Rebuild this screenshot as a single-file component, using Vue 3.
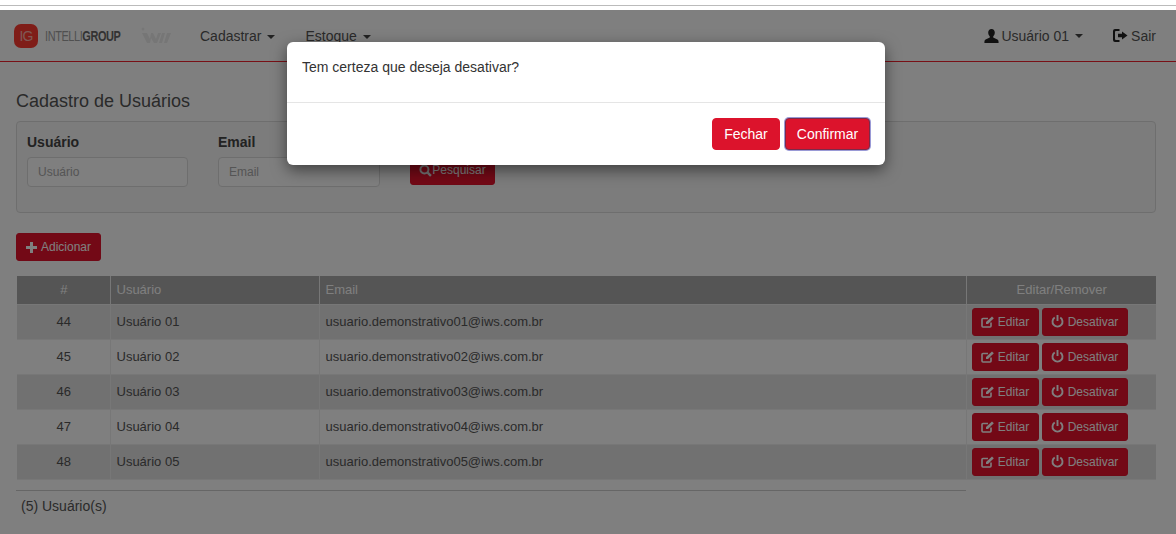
<script setup>
const rows = [
  { id: 44, nome: 'Usuário 01', email: 'usuario.demonstrativo01@iws.com.br' },
  { id: 45, nome: 'Usuário 02', email: 'usuario.demonstrativo02@iws.com.br' },
  { id: 46, nome: 'Usuário 03', email: 'usuario.demonstrativo03@iws.com.br' },
  { id: 47, nome: 'Usuário 04', email: 'usuario.demonstrativo04@iws.com.br' },
  { id: 48, nome: 'Usuário 05', email: 'usuario.demonstrativo05@iws.com.br' },
]
</script>

<template>
  <div class="shot">
    <div class="chrome"></div>
    <div class="page">
      <header class="nav">
        <div class="logo">
          <span class="logo-mark">IG</span>
          <span class="logo-text">INTELLI<b>GROUP</b></span>
          <svg class="iwi" width="32" height="18" viewBox="0 0 32 18">
            <circle cx="3" cy="2" r="1.5" fill="#efefef" />
            <path d="M2 6l5 10h3l1-5 3 5h3l4-10h-3l-2 6-3-6h-2l-1 6-3-6zM22 6l-3 10h3l3-10zM27 6l-3 10h3l4-10z" fill="#ececec" />
          </svg>
        </div>
        <nav class="menu">
          <span class="item">Cadastrar<i class="caret"></i></span>
          <span class="item">Estoque<i class="caret"></i></span>
        </nav>
        <div class="right">
          <span class="user">
            <svg class="ico-user" width="15" height="14" viewBox="0 0 15 14"><path fill="#222" d="M7.5 0C5.4 0 4.2 1.5 4.2 3.6c0 1.5.6 3 1.6 3.9v1L1.6 10.4C.7 10.9.4 11.600.4 14h14.2c0-2.4-.3-3.100-1.200-3.600L9.200 8.500v-1c1-.9 1.600-2.400 1.600-3.900C10.800 1.500 9.600 0 7.500 0z" /></svg>
            Usuário 01<i class="caret"></i>
          </span>
          <span class="sair">
            <svg class="ico-out" width="15" height="13" viewBox="0 0 15 13"><path fill="#222" d="M2 0h4.500v2H3a1 1 0 0 0-1 1v7a1 1 0 0 0 1 1h3.500v2H2a2 2 0 0 1-2-2V2a2 2 0 0 1 2-2z" /><path fill="#222" d="M9 2.500l5.500 4-5.500 4V8.300H5V4.700h4z" /></svg>
            Sair
          </span>
        </div>
      </header>

      <main class="content">
        <h1 class="title">Cadastro de Usuários</h1>
        <section class="filter">
          <div class="field">
            <label>Usuário</label>
            <div class="input">Usuário</div>
          </div>
          <div class="field field-email">
            <label>Email</label>
            <div class="input">Email</div>
          </div>
          <button class="btn btn-search">
            <svg width="13" height="13" viewBox="0 0 12 12"><circle cx="5" cy="5" r="3.700" fill="none" stroke="#e6e6e6" stroke-width="1.800" /><path d="M7.800 7.800L11 11" stroke="#e6e6e6" stroke-width="2.200" /></svg>Pesquisar
          </button>
        </section>

        <button class="btn btn-add">
          <svg width="11" height="11" viewBox="0 0 11 11"><path fill="#fff" d="M4 0h3v4h4v3H7v4H4V7H0V4h4z" /></svg>
          Adicionar
        </button>

        <table class="grid">
          <thead>
            <tr>
              <th class="c-id">#</th>
              <th class="c-nome">Usuário</th>
              <th>Email</th>
              <th class="c-acao">Editar/Remover</th>
            </tr>
          </thead>
          <tbody>
            <tr v-for="r in rows" :key="r.id">
              <td class="c-id">{{ r.id }}</td>
              <td>{{ r.nome }}</td>
              <td>{{ r.email }}</td>
              <td class="acoes">
                <button class="btn btn-row btn-edit">
                  <svg width="13" height="12" viewBox="0 0 13 12"><path fill="none" stroke="#fff" stroke-width="1.600" d="M10 6.500V10a1 1 0 0 1-1 1H2a1 1 0 0 1-1-1V3.500a1 1 0 0 1 1-1h5" /><path fill="#fff" d="M11 .500l1.800 1.800L7 8H5V6z" /></svg>
                  Editar
                </button>
                <button class="btn btn-row btn-off">
                  <svg width="13" height="13" viewBox="0 0 13 13"><path fill="none" stroke="#fff" stroke-width="1.900" d="M3.700 2.500a5 5 0 1 0 5.600 0" /><path stroke="#fff" stroke-width="1.900" d="M6.500 0v6" /></svg>
                  Desativar
                </button>
              </td>
            </tr>
          </tbody>
        </table>
        <div class="count">(5) Usuário(s)</div>
      </main>

      <div class="backdrop"></div>
      <div class="modal">
        <div class="modal-body">Tem certeza que deseja desativar?</div>
        <div class="modal-foot">
          <button class="mbtn mbtn-close">Fechar</button>
          <button class="mbtn mbtn-focus">Confirmar</button>
        </div>
      </div>
    </div>
  </div>
</template>

<style>
html, body { margin: 0; background: #fff; }
</style>

<style scoped>
.shot { width: 1176px; height: 534px; overflow: hidden; font-family: "Liberation Sans", Arial, sans-serif; font-size: 14px; color: #555; }
.chrome { height: 5px; border-bottom: 1px solid #bbb; box-sizing: content-box; margin-bottom: 4px; }
.page { position: relative; height: 524px; background: #fff; overflow: hidden; }
.backdrop { position: absolute; inset: 0; background: rgba(0, 0, 0, .5); }

.nav { height: 51px; border-bottom: 1px solid #f0202c; display: flex; align-items: center; padding: 0 20px 0 14px; }
.logo { display: flex; align-items: center; width: 186px; }
.logo-mark { width: 24px; height: 24px; border-radius: 7px; background: #ff3a30; color: #ffb0a8; font-size: 14px; letter-spacing: -1px; text-align: center; line-height: 24px; font-weight: 400; }
.logo-text { margin-left: 7px; font-size: 14px; letter-spacing: -.5px; color: #a0a0a0; width: 77px; white-space: nowrap; transform: scaleX(.78); transform-origin: left center; }
.logo-text b { color: #666; }
.iwi { margin-left: 18px; }
.menu { display: flex; gap: 30px; }
.caret { display: inline-block; width: 0; height: 0; margin-left: 6px; vertical-align: middle; border-top: 4px solid #444; border-left: 4px solid transparent; border-right: 4px solid transparent; }
.right { margin-left: auto; display: flex; align-items: center; gap: 30px; }
.user, .sair { display: flex; align-items: center; }
.ico-user { margin-right: 2px; }
.ico-out { margin-right: 3px; }

.content { padding: 0 20px 0 16px; }
.title { font-size: 18px; font-weight: 400; line-height: 20px; margin: 29px 0 10px; color: #555; }
.filter { height: 92px; box-sizing: border-box; border: 1px solid #ddd; border-radius: 4px; background: #f8f8f8; padding: 10px; display: flex; align-items: flex-start; }
.field { width: 161px; margin-right: 30px; }
.field label { display: block; font-weight: 700; line-height: 20px; margin-bottom: 5px; color: #444; }
.field-email { width: 162px; }
.input { height: 30px; box-sizing: border-box; border: 1px solid #ddd; border-radius: 4px; background: #fff; font-size: 12px; line-height: 28px; padding: 0 10px; color: #aaa; }
.btn { border: 1px solid #e0132d; background: #e6132d; color: #fff; border-radius: 3px; font-family: inherit; font-size: 12px; padding: 0; cursor: pointer; }
.btn-search { margin-top: 23px; width: 85px; height: 30px; display: flex; align-items: center; justify-content: center; }
.btn-add { display: flex; align-items: center; justify-content: center; gap: 4px; width: 85px; height: 28px; margin-top: 20px; }

.grid { width: 1139px; margin: 15px 0 0 1px; border-collapse: collapse; table-layout: fixed; }
.grid th { background: #aaa; color: #fff; font-weight: 400; font-size: 13px; height: 28px; padding: 0 5px 1px 6px; box-sizing: border-box; text-align: left; border-left: 1px solid #eee; border-bottom: 1px solid #eee; }
.grid td { height: 35px; padding: 0 5px 1px 6px; border-left: 1px solid #eee; border-bottom: 1px solid #eee; box-sizing: border-box; font-size: 13px; color: #555; }
.grid th:first-child, .grid td:first-child { border-left: 0; }
.grid tbody tr:nth-child(odd) td { background: #e2e2e2; }
.grid tbody tr:nth-child(even) td { background: #fff; }
.grid .c-id { width: 93px; text-align: center; }
.grid .c-nome { width: 209px; }
.grid .c-acao { width: 190px; text-align: center; }
.grid td.acoes { white-space: nowrap; padding: 0 5px; }
.btn-row { display: inline-flex; align-items: center; justify-content: center; gap: 4px; height: 28px; vertical-align: middle; }
.btn-edit { width: 67px; margin-right: 3px; }
.btn-off { width: 86px; }

.count { width: 950px; margin-top: 10px; box-sizing: border-box; border-top: 1px solid #ccc; padding: 5px; line-height: 20px; color: #555; }

.modal { position: absolute; left: 287px; top: 32px; width: 598px; height: 123px; background: #fff; border-radius: 6px; box-shadow: 0 5px 15px rgba(0, 0, 0, .5); color: #333; }
.modal-body { height: 61px; box-sizing: border-box; padding: 15px; line-height: 20px; border-bottom: 1px solid #e5e5e5; }
.modal-foot { display: flex; justify-content: flex-end; gap: 5px; padding: 15px; }
.mbtn { height: 32px; border: 1px solid #dc132c; background: #dc132c; color: #fff; border-radius: 4px; font-family: inherit; font-size: 14px; padding: 0; cursor: pointer; }
.mbtn-close { width: 68px; }
.mbtn-focus { width: 85px; box-shadow: 0 0 0 1px #9a9ad6; border-color: #7c2a4a; }
</style>
